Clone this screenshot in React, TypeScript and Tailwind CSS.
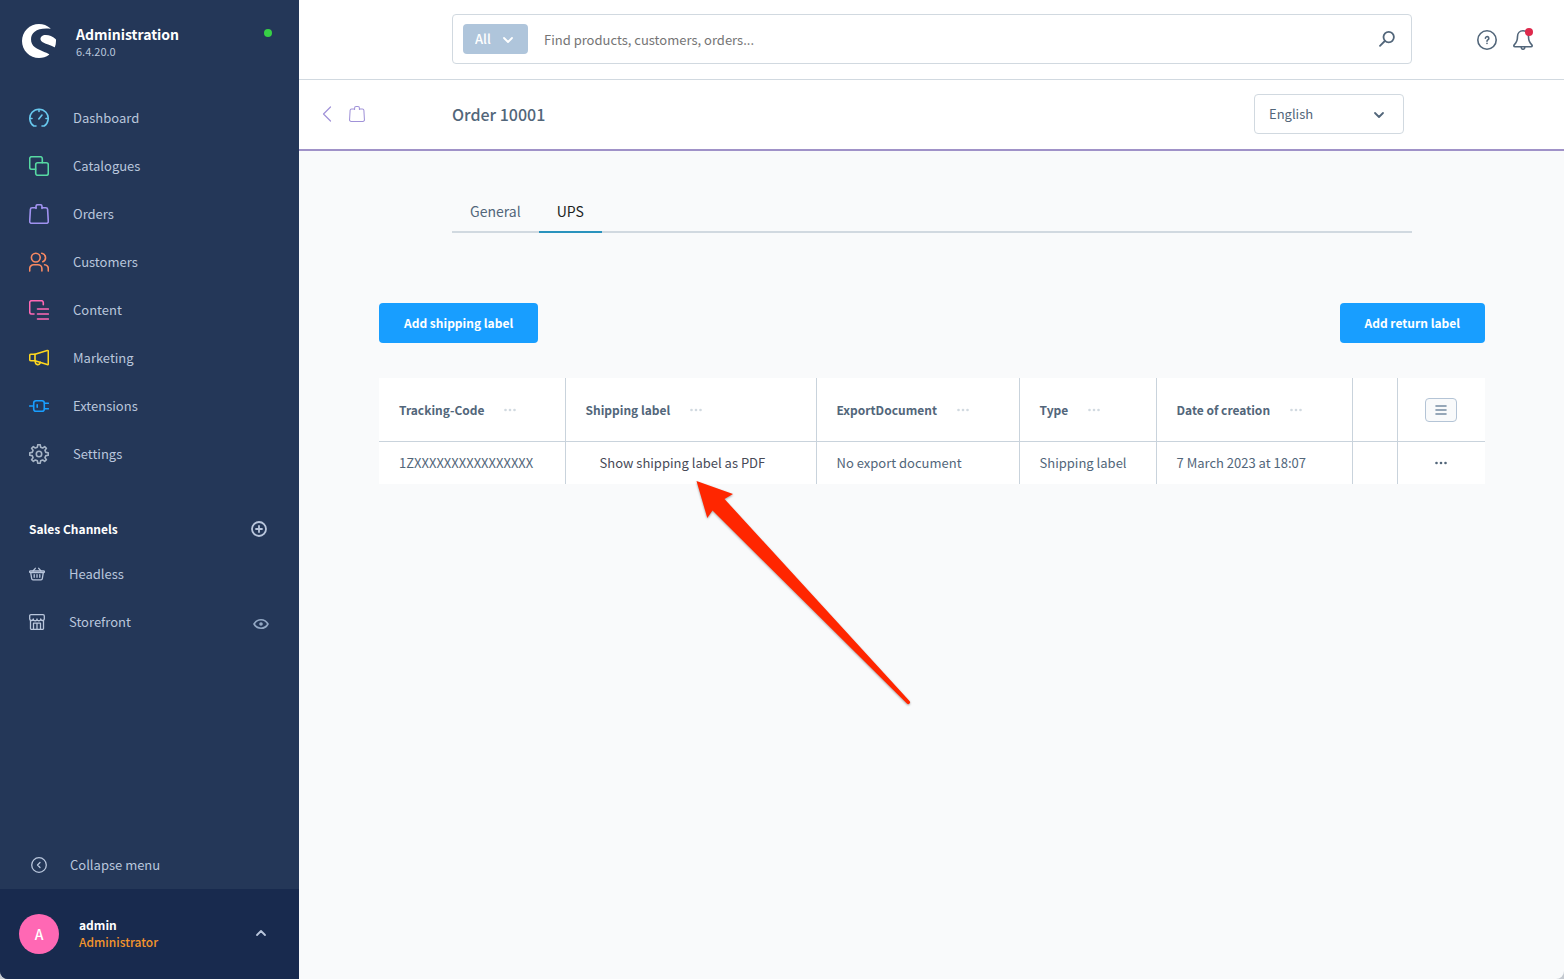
import { ReactNode } from 'react';
import { SiShopware } from 'react-icons/si';

interface IconProps {
  className?: string;
  size?: number;
  box?: number;
  width?: number;
  children?: ReactNode;
}

function Icon({ className, size = 20, box = 20, width = 1.6, children }: IconProps) {
  return (
    <svg
      width={size}
      height={size}
      viewBox={`0 0 ${box} ${box}`}
      fill="none"
      stroke="currentColor"
      strokeWidth={width}
      strokeLinecap="round"
      strokeLinejoin="round"
      className={`shrink-0 ${className ?? ''}`}
      aria-hidden="true"
    >
      {children}
    </svg>
  );
}

function gearPath(cx: number, cy: number, outer: number, inner: number, teeth: number) {
  const step = (Math.PI * 2) / teeth;
  const points: string[] = [];
  for (let i = 0; i < teeth; i++) {
    const mid = i * step - Math.PI / 2;
    [
      [inner, -0.3],
      [outer, -0.17],
      [outer, 0.17],
      [inner, 0.3],
    ].forEach(([r, offset]) => {
      const angle = mid + offset * step;
      points.push(`${(cx + r * Math.cos(angle)).toFixed(2)} ${(cy + r * Math.sin(angle)).toFixed(2)}`);
    });
  }
  return `M${points.join('L')}Z`;
}

const bag = (
  <>
    <path d="M7 3.7H3.2a1.8 1.8 0 0 0-1.8 1.7L.7 17.3a1.9 1.9 0 0 0 1.9 2h14.8a1.9 1.9 0 0 0 1.9-2l-.7-11.9a1.8 1.8 0 0 0-1.8-1.7H13" />
    <path d="M7 4.5v-2A1.8 1.8 0 0 1 8.8.7h2.4A1.8 1.8 0 0 1 13 2.5v2" />
  </>
);

const navItems = [
  {
    label: 'Dashboard',
    color: 'text-[#68c8ee]',
    icon: (
      <>
        <path d="M7 18H4.8a9.2 9.2 0 1 1 10.4 0H13" />
        <path d="M10 1.5v1.9M1.2 10.5h1.8M17 10.5h1.8M9.8 11l3.2-4" />
      </>
    ),
  },
  {
    label: 'Catalogues',
    color: 'text-[#57d9a3]',
    icon: (
      <>
        <rect x="6.7" y="6.7" width="12.6" height="12.6" rx="2" />
        <path d="M6.7 13.3h-4a2 2 0 0 1-2-2V2.7a2 2 0 0 1 2-2h8.6a2 2 0 0 1 2 2v4" />
      </>
    ),
  },
  { label: 'Orders', color: 'text-[#a092f0]', icon: bag },
  {
    label: 'Customers',
    color: 'text-[#f88962]',
    icon: (
      <>
        <circle cx="6.8" cy="5.6" r="4.4" />
        <path d="M.7 19v-2.3a4 4 0 0 1 4-4h4.2a4 4 0 0 1 4 4V19" />
        <path d="M12.8 1.3a4.4 4.4 0 0 1 1 8.4M15.6 12.8c2.3.3 3.7 2 3.7 4V19" />
      </>
    ),
  },
  {
    label: 'Content',
    color: 'text-[#ff68b4]',
    icon: (
      <>
        <path d="M5 14H2.7a2 2 0 0 1-2-2V2.7a2 2 0 0 1 2-2h9.6a2 2 0 0 1 2 2v2" />
        <path d="M8.5 9h10.8M8.5 14h10.8M8.5 19h10.8" />
      </>
    ),
  },
  {
    label: 'Marketing',
    color: 'text-[#ffd71e]',
    icon: (
      <>
        <path d="M6 6.3l12.2-3.7c.7-.2 1.1.1 1.1.8v12.4c0 .7-.4 1-1.1.8L6 12.7z" />
        <path d="M6 6.3H2A1.3 1.3 0 0 0 .7 7.6v3.8A1.3 1.3 0 0 0 2 12.7h4M6.3 13c-.3 4.6 4.6 4.6 5 1.3" />
      </>
    ),
  },
  {
    label: 'Extensions',
    color: 'text-[#189eff]',
    icon: (
      <>
        <path d="M.7 10h4M7 4.7h6a2.3 2.3 0 0 1 2.3 2.3v6a2.3 2.3 0 0 1-2.3 2.3H7A2.3 2.3 0 0 1 4.7 13V7A2.3 2.3 0 0 1 7 4.7zM8.2 8.8v2.4" />
        <path d="M15.5 7.3h3.8M15.5 12.7h3.8" />
      </>
    ),
  },
  {
    label: 'Settings',
    color: 'text-[#a6b4c6]',
    icon: (
      <>
        <path d={gearPath(10, 10, 9.3, 7, 8)} />
        <circle cx="10" cy="10" r="2.7" />
      </>
    ),
  },
];

const columns = [
  { label: 'Tracking-Code', width: 'w-[186px]' },
  { label: 'Shipping label', width: '' },
  { label: 'ExportDocument', width: 'w-[203px]' },
  { label: 'Type', width: 'w-[137px]' },
  { label: 'Date of creation', width: 'w-[196px]' },
];

const pageGrid = 'grid grid-cols-[minmax(153px,1fr)_minmax(0,960px)_minmax(152px,1fr)]';

function Dots({ className }: { className?: string }) {
  return (
    <svg width="12" height="4" viewBox="0 0 12 4" fill="currentColor" className={className} aria-hidden="true">
      <circle cx="1.5" cy="2" r="1.3" />
      <circle cx="6" cy="2" r="1.3" />
      <circle cx="10.5" cy="2" r="1.3" />
    </svg>
  );
}

function Sidebar() {
  return (
    <aside className="flex w-[299px] shrink-0 flex-col bg-[#243758] text-[13px] text-[#b9c6dc]">
      <div className="flex h-[94px] items-start pt-6 pr-[27px] pl-[22px]">
        <SiShopware className="size-[34px] text-white" />
        <div className="ml-5 flex-1">
          <div className="text-sm leading-5 font-bold text-white">Administration</div>
          <div className="text-[11px] leading-[14px]">6.4.20.0</div>
        </div>
        <span className="mt-[5px] size-2 rounded-full bg-[#37d046]" />
      </div>

      <nav>
        {navItems.map((item) => (
          <a key={item.label} href="#" className="flex h-12 items-center gap-6 px-[29px]">
            <Icon className={item.color}>{item.icon}</Icon>
            {item.label}
          </a>
        ))}
      </nav>

      <div className="mt-[30px] flex h-[42px] items-center justify-between pr-8 pl-[29px]">
        <h2 className="text-xs font-bold text-white">Sales Channels</h2>
        <button type="button" aria-label="Add sales channel">
          <Icon size={16} box={16} width={1.8}>
            <circle cx="8" cy="8" r="7" />
            <path d="M8 5v6M5 8h6" />
          </Icon>
        </button>
      </div>
      <a href="#" className="flex h-12 items-center gap-6 pr-[30px] pl-[29px]">
        <Icon size={16} box={16} width={1.3}>
          <path d="M1.5 5h13c.6 0 .9.3.9.8 0 .6-.4.9-.9.9h-13C1 6.7.6 6.4.6 5.8c0-.5.3-.8.9-.8zM1.7 6.7l1 6c.1.7.6 1.1 1.3 1.1h8c.7 0 1.2-.4 1.3-1.1l1-6" />
          <path d="M4 5l2.3-2.7M12 5L9.7 2.3M5.2 8.7v2.6M8 8.7v2.6M10.8 8.7v2.6" />
        </Icon>
        Headless
      </a>
      <div className="flex h-12 items-center pr-[30px] pl-[29px]">
        <a href="#" className="flex flex-1 items-center gap-6">
          <Icon size={16} box={16} width={1.3}>
            <path d="M1.5 6.5v8a.9.9 0 0 0 .9.9h11.2a.9.9 0 0 0 .9-.9v-8" />
            <path d="M2 .7h12c.8 0 1.3.5 1.3 1.3v2.5a1.8 1.8 0 0 1-3.6.4 1.85 1.85 0 0 1-3.7 0 1.85 1.85 0 0 1-3.7 0A1.8 1.8 0 0 1 .7 4.5V2C.7 1.2 1.2.7 2 .7z" />
            <path d="M4.5 15V9.2h7V15M8 9.2V15" />
          </Icon>
          Storefront
        </a>
        <button type="button" aria-label="Open storefront" className="mt-1 text-[#93a8c4]">
          <Icon size={16} box={15}>
            <path d="M1 7.5C3.8 2.2 11.2 2.2 14 7.5 11.2 12.8 3.8 12.8 1 7.5z" />
            <circle cx="7.5" cy="7.5" r=".9" />
          </Icon>
        </button>
      </div>

      <button type="button" className="mt-auto flex h-12 items-center gap-[23px] px-[31px] text-left">
        <Icon size={16} box={16} width={1.3}>
          <circle cx="8" cy="8" r="7.3" />
          <path d="M9 5.5L6.5 8 9 10.5" />
        </Icon>
        Collapse menu
      </button>
      <button type="button" className="flex h-[90px] items-center bg-[#182a4e] pr-8 pl-[19px] text-left">
        <span className="flex size-10 items-center justify-center rounded-full bg-[#ff68b4] text-sm font-medium text-white">
          A
        </span>
        <span className="ml-5 flex-1 pb-[2px] text-xs">
          <span className="block leading-[17px] font-bold text-white">admin</span>
          <span className="block leading-[17px] font-medium text-[#f4952c]">Administrator</span>
        </span>
        <Icon size={12} box={12} width={1.8}>
          <path d="M2 7l4-4 4 4" />
        </Icon>
      </button>
    </aside>
  );
}

function SearchBar() {
  return (
    <form className="flex h-[50px] items-center rounded border border-[#d1d9e0] pr-4 pl-[10px]">
      <div className="relative text-white">
        <select
          aria-label="Search scope"
          className="block h-[30px] w-[65px] appearance-none rounded bg-[#afc5db] pl-3 text-[13px] font-medium"
        >
          <option>All</option>
        </select>
        <Icon size={12} box={12} width={1.8} className="pointer-events-none absolute top-[10px] right-[14px]">
          <path d="M2 4l4 4 4-4" />
        </Icon>
      </div>
      <input
        type="search"
        aria-label="Search"
        placeholder="Find products, customers, orders..."
        className="ml-4 h-8 min-w-0 flex-1 text-[13px] outline-none placeholder:text-[#757575]"
      />
      <button type="submit" aria-label="Start search" className="text-[#52667a]">
        <Icon size={16} box={16} width={1.8}>
          <circle cx="9.7" cy="6.1" r="5.2" />
          <path d="M5.8 10L1 14.8" />
        </Icon>
      </button>
    </form>
  );
}

function LabelTable() {
  return (
    <table className="mt-[35px] w-full table-fixed border-collapse bg-white text-left">
      <thead>
        <tr className="h-[63px] border-b border-[#c9d3dc]">
          {columns.map((column) => (
            <th key={column.label} className={`${column.width} border-r border-[#c9d3dc] px-5 font-bold text-[#52667a]`}>
              <div className="flex items-center gap-5 pt-px text-xs">
                {column.label}
                <Dots className="text-[#d1d9e0]" />
              </div>
            </th>
          ))}
          <th className="w-[45px] border-r border-[#c9d3dc]" />
          <th className="w-[88px] pt-[2px]">
            <button
              type="button"
              aria-label="Table settings"
              className="mx-auto flex h-6 w-8 items-center justify-center rounded border border-[#b4c4d6] bg-[#f9fafb] text-[#758ca3]"
            >
              <Icon size={12} box={12}>
                <path d="M1 2h10M1 6h10M1 10h10" />
              </Icon>
            </button>
          </th>
        </tr>
      </thead>
      <tbody className="text-[13px] text-[#52667a]">
        <tr className="h-[43px]">
          <td className="border-r border-[#c9d3dc] px-5">1ZXXXXXXXXXXXXXXXX</td>
          <td className="relative border-r border-[#c9d3dc] px-[34px]">
            <a href="#" className="text-[#474a57]">
              Show shipping label as PDF
            </a>
            {/* pointer to the PDF link */}
            <svg
              width="226"
              height="236"
              viewBox="0 0 226 236"
              className="pointer-events-none absolute top-[34px] left-[124px] z-10 drop-shadow-[0_1px_1px_rgba(0,0,0,0.35)]"
              aria-hidden="true"
            >
              <path
                d="M6.5 5L43 18 34.5 23 219.5 225a1.8 1.8 0 0 1-2.6 2.6L22.500 34.500 17.300 42z"
                fill="#ff2600"
              />
            </svg>
          </td>
          <td className="border-r border-[#c9d3dc] px-5">No export document</td>
          <td className="border-r border-[#c9d3dc] px-5">Shipping label</td>
          <td className="border-r border-[#c9d3dc] px-5">7 March 2023 at 18:07</td>
          <td className="border-r border-[#c9d3dc]" />
          <td>
            <button type="button" aria-label="Row actions" className="mx-auto flex h-5 w-8 items-center justify-center">
              <Dots />
            </button>
          </td>
        </tr>
      </tbody>
    </table>
  );
}

export default function App() {
  return (
    <div className="bg-[#c4c9d0]">
      <div className="flex min-h-screen overflow-hidden rounded-b-lg bg-[#f9fafb] font-['Noto_Sans_CJK_SC','Noto_Sans',sans-serif] text-[#52667a]">
        <Sidebar />

        <div className="min-w-0 flex-1">
          <header className={`${pageGrid} h-20 border-b border-[#d1d9e0] bg-white pt-[14px]`}>
            <div />
            <SearchBar />
            <div className="flex h-[52px] items-center justify-end gap-4 pr-[31px]">
              <button type="button" aria-label="Help">
                <Icon>
                  <circle cx="10" cy="10" r="9.2" />
                  <path d="M8.4 8.3a1.7 1.7 0 1 1 2.7 1.4c-.7.5-1.1.8-1.1 1.6M10 13.3v.1" />
                </Icon>
              </button>
              <button type="button" aria-label="Notifications" className="relative">
                <Icon>
                  <path d="M10 .8C6.600.8 4.500 3.300 4.500 6.500c0 4-.9 6-2.900 7.800-1.300 1.200-.9 2.400.5 2.400h15.800c1.400 0 1.800-1.200.5-2.400-2-1.800-2.900-3.800-2.900-7.800C15.500 3.300 13.400.8 10 .8z" />
                  <path d="M8.2 17.2c.2 2.7 3.4 2.7 3.6 0" />
                </Icon>
                <span className="absolute -top-[2px] right-0 size-2 rounded-full bg-[#de294c]" />
              </button>
            </div>
          </header>

          <div className={`${pageGrid} h-[71px] items-start border-b-2 border-[#a092c8] bg-white pt-[14px]`}>
            <div className="flex h-10 items-center gap-[14px] pl-5 text-[#a092d8]">
              <a href="#" aria-label="Back to orders">
                <Icon size={16} box={16} width={1.2}>
                  <path d="M11.500 1L4.500 8l7 7" />
                </Icon>
              </a>
              <Icon size={16} width={1.3}>
                {bag}
              </Icon>
            </div>
            <div className="flex items-center justify-between pr-2">
              <h1 className="text-base font-medium">Order 10001</h1>
              <div className="relative">
                <select
                  aria-label="Language"
                  className="block h-10 w-[150px] appearance-none rounded border border-[#d1d9e0] bg-white pl-[14px] text-[13px]"
                >
                  <option>English</option>
                </select>
                <Icon size={12} box={12} width={1.8} className="pointer-events-none absolute top-[15px] right-[19px]">
                  <path d="M2 4l4 4 4-4" />
                </Icon>
              </div>
            </div>
          </div>

          <main>
            <div className={`${pageGrid} pt-10`}>
              <nav className="col-start-2 flex h-[42px] border-b-2 border-[#d1d9e0] text-sm">
                <a href="#" className="flex h-[42px] items-center border-b-2 border-transparent px-[18px]">
                  General
                </a>
                <a href="#" className="flex h-[42px] items-center border-b-2 border-[#2a93bd] px-[18px] text-[#1c1f23]">
                  UPS
                </a>
              </nav>
            </div>

            <div className="pt-[70px] pr-[79px] pl-20">
              <div className="flex justify-between">
                <button type="button" className="h-10 rounded bg-[#189eff] px-[25px] text-xs font-bold text-white">
                  Add shipping label
                </button>
                <button type="button" className="h-10 rounded bg-[#189eff] px-[25px] text-xs font-bold text-white">
                  Add return label
                </button>
              </div>
              <LabelTable />
            </div>
          </main>
        </div>
      </div>
    </div>
  );
}
